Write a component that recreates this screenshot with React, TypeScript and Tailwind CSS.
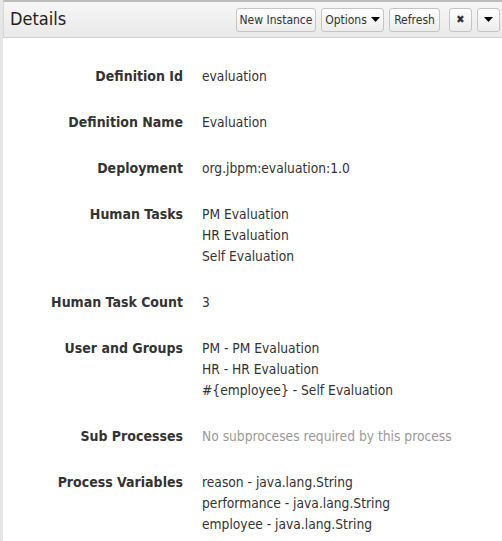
import React from "react";

interface Row {
    label: string;
    values: string[];
    muted?: boolean;
}

const rows: Row[] = [
    { label: "Definition Id", values: ["evaluation"] },
    { label: "Definition Name", values: ["Evaluation"] },
    { label: "Deployment", values: ["org.jbpm:evaluation:1.0"] },
    { label: "Human Tasks", values: ["PM Evaluation", "HR Evaluation", "Self Evaluation"] },
    { label: "Human Task Count", values: ["3"] },
    { label: "User and Groups", values: ["PM - PM Evaluation", "HR - HR Evaluation", "#{employee} - Self Evaluation"] },
    { label: "Sub Processes", values: ["No subproceses required by this process"], muted: true },
    { label: "Process Variables", values: ["reason - java.lang.String", "performance - java.lang.String", "employee - java.lang.String"] },
];

const font = { fontFamily: '"DejaVu Sans Condensed", "DejaVu Sans", Tahoma, sans-serif' };

function Btn({ children, className = "" }: { children: React.ReactNode; className?: string }) {
    return (
        <button
            type="button"
            className={`h-[24px] rounded-[3px] border border-[#c5c5c5] bg-gradient-to-b from-white to-[#ececec] text-[12px] text-[#333] flex items-center justify-center shadow-[inset_0_1px_0_#fff] ${className}`}
        >
            {children}
        </button>
    );
}

function Caret() {
    return (
        <svg width="9" height="5" viewBox="0 0 9 5" className="fill-black">
            <path d="M0 0h9L4.5 5z" />
        </svg>
    );
}

export default function App() {
    return (
        <div className="w-[502px] h-[541px] bg-white flex overflow-hidden" style={font}>
            <div className="w-[3px] shrink-0 bg-[#e6e6e6]" />
            <div className="flex-1 flex flex-col">
                <div className="h-[38px] shrink-0 border-t-2 border-t-[#bdbdbd] border-b border-b-[#cfcfcf] border-l border-l-[#d6d6d6] bg-gradient-to-b from-[#f7f7f7] to-[#e9e9e9] flex items-center pl-[6px] pr-[2px]">
                    <h3 className="text-[18px] text-[#222] flex-1 leading-none mt-[-2px]">Details</h3>
                    <Btn className="w-[80px] mr-[5px]">New Instance</Btn>
                    <Btn className="w-[63px] mr-[5px] gap-[4px]">
                        Options <Caret />
                    </Btn>
                    <Btn className="w-[51px] mr-[9px]">Refresh</Btn>
                    <Btn className="w-[23px] mr-[5px]">
                        <span className="text-[11px] font-bold leading-none">✖</span>
                    </Btn>
                    <Btn className="w-[23px]">
                        <Caret />
                    </Btn>
                </div>
                <div className="pt-[28px] flex flex-col gap-[25px] text-[14px] leading-[21px]">
                    {rows.map((r) => (
                        <div key={r.label} className="flex">
                            <div className="w-[180px] shrink-0 text-right font-bold text-[#333]">{r.label}</div>
                            <div className={`pl-[19px] text-[13.7px] ${r.muted ? "text-[#999]" : "text-[#333]"}`}>
                                {r.values.map((v) => (
                                    <div key={v}>{v}</div>
                                ))}
                            </div>
                        </div>
                    ))}
                </div>
            </div>
        </div>
    );
}
